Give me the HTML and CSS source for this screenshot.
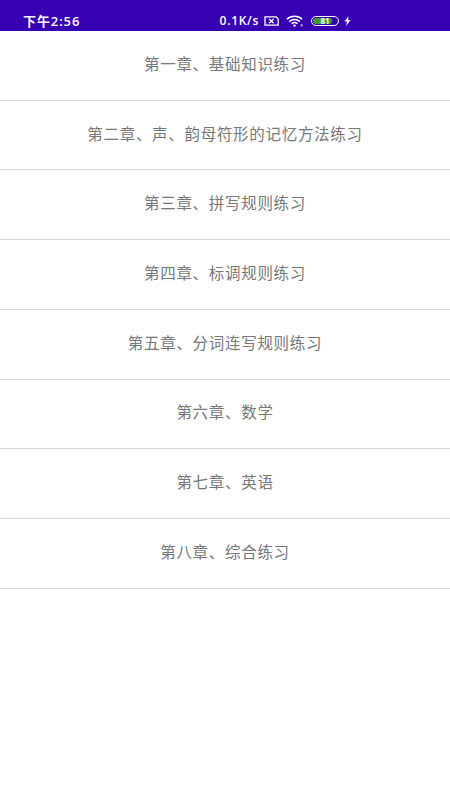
FILE: index.html
```html
<!DOCTYPE html>
<html lang="zh-CN">
<head>
    <meta charset="UTF-8">
    <meta name="viewport" content="width=device-width, initial-scale=1.0">
    <title>练习</title>
    <link rel="stylesheet" href="styles.css">
</head>
<body>

    <!-- 状态栏 -->
    <header class="status-bar">
        <span class="time">下午2:56</span>
        <div class="status-icons">
            <span class="speed">0.1K/s</span>
            <svg class="icon-sim" width="15" height="10" viewBox="0 0 15 10">
                <path d="M1 .8h11.2L14.2 3v6.2H1z" fill="none" stroke="#fff" stroke-width="1.3"/>
                <path d="M5.2 3l4.4 4.2M9.6 3L5.2 7.2" stroke="#fff" stroke-width="1.2"/>
            </svg>
            <svg class="icon-wifi" width="18" height="12" viewBox="0 0 18 12">
                <path d="M.8 4.2a11.5 11.5 0 0 1 15.4 0M3.2 6.6a8 8 0 0 1 10.6 0M5.6 8.8a4.4 4.4 0 0 1 5.8 0" fill="none" stroke="#fff" stroke-width="1.5"/>
                <circle cx="8.5" cy="10.6" r="1.2" fill="#fff"/>
                <circle cx="15.6" cy="10.4" r="1.1" fill="#c9c2e6"/>
            </svg>
            <div class="battery">
                <div class="battery-level" style="width: 81%"></div>
                <span class="battery-text">81</span>
            </div>
            <svg class="icon-bolt" width="7" height="10" viewBox="0 0 7 10">
                <path d="M4.5 0L0.5 5.6h2.4L2.2 10l4.3-6H4z" fill="#fff"/>
            </svg>
        </div>
    </header>

    <ul class="chapter-list">
        <li class="chapter-item">第一章、基础知识练习</li>
        <li class="chapter-item">第二章、声、韵母符形的记忆方法练习</li>
        <li class="chapter-item">第三章、拼写规则练习</li>
        <li class="chapter-item">第四章、标调规则练习</li>
        <li class="chapter-item">第五章、分词连写规则练习</li>
        <li class="chapter-item">第六章、数学</li>
        <li class="chapter-item">第七章、英语</li>
        <li class="chapter-item">第八章、综合练习</li>
    </ul>

</body>
</html>
```

FILE: styles.css
```css
body {
    font-family: "Noto Sans CJK SC", Roboto, sans-serif;
    background: #fff;
    margin: 0;
    padding: 0;
}

/* 状态栏 */
.status-bar {
    height: 31px;
    box-sizing: border-box;
    padding: 13px 99px 3px 23px;
    background-color: #3700b3;
    color: #fff;
    display: flex;
    align-items: center;
    justify-content: space-between;
}

.time {
    font-family: "Open Sans", "Noto Sans CJK SC", sans-serif;
    font-size: 13px;
    font-weight: 600;
    line-height: 16px;
    letter-spacing: 0.9px;
}

.status-icons {
    display: flex;
    align-items: center;
}

.speed {
    font-family: "Open Sans", sans-serif;
    font-size: 12px;
    font-weight: 600;
    line-height: 16px;
    letter-spacing: 0.7px;
    margin-right: 5px;
}

.icon-wifi {
    margin: 0 7px;
}

.battery {
    position: relative;
    width: 28px;
    height: 10px;
    box-sizing: border-box;
    padding: 1px;
    border: 1px solid #fff;
    border-radius: 5px;
    margin-right: 5px;
}

.battery-level {
    height: 100%;
    background-color: #3f9b35;
    border-radius: 3px;
}

.battery-text {
    position: absolute;
    top: -1px;
    left: 0;
    right: 0;
    font-family: "Open Sans", sans-serif;
    font-size: 8px;
    font-weight: 700;
    line-height: 10px;
    text-align: center;
    color: #fff;
}

/* 章节列表 */
.chapter-list {
    list-style: none;
    margin: 0;
    padding: 0;
}

.chapter-item {
    height: 69.71px;
    box-sizing: border-box;
    padding-bottom: 5px;
    display: flex;
    align-items: center;
    justify-content: center;
    border-bottom: 1px solid #d8d8d8;
    font-size: 15.5px;
    letter-spacing: 0.7px;
    color: #777;
}
```
